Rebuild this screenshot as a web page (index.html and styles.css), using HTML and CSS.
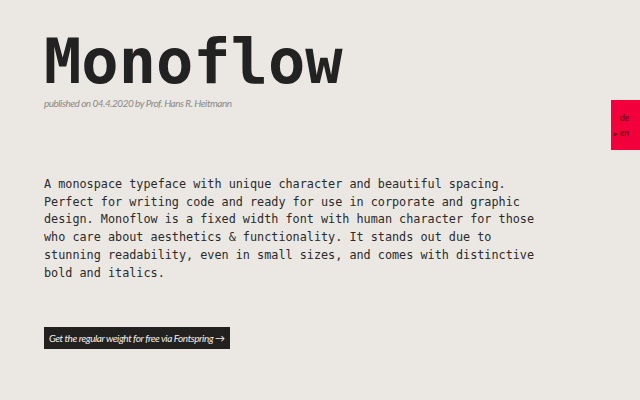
FILE: index.html
```html
<!DOCTYPE html>
<html lang="en">
<head>
<meta charset="utf-8">
<title>Monoflow</title>
<link rel="stylesheet" href="styles.css">
</head>
<body>
<nav class="lang">
  <a class="lang-item" href="#">de</a>
  <a class="lang-item active" href="#"><span class="caret">▸</span>en</a>
</nav>
<main class="page">
  <header class="head">
    <h1 class="title">Monoflow</h1>
    <p class="byline">published on 04.4.2020 by Prof. Hans R. Heitmann</p>
  </header>
  <p class="intro">A monospace typeface with unique character and beautiful spacing.
Perfect for writing code and ready for use in corporate and graphic
design. Monoflow is a fixed width font with human character for those
who care about aesthetics &amp; functionality. It stands out due to
stunning readability, even in small sizes, and comes with distinctive
bold and italics.</p>
  <a class="cta" href="#">Get the regular weight for free via Fontspring <span class="arrow">→</span></a>
</main>
</body>
</html>
```
FILE: styles.css
```css
html, body {
  margin: 0;
  padding: 0;
}
body {
  background: #ebe8e4;
  color: #2a2a2a;
  width: 640px;
  height: 400px;
  overflow: hidden;
  position: relative;
}
.page {
  padding: 26px 0 0 44px;
  display: flex;
  flex-direction: column;
  align-items: flex-start;
}
.title {
  margin: 0;
  font-family: "DejaVu Sans Mono", monospace;
  font-weight: bold;
  font-size: 62px;
  line-height: 72px;
  color: #222;
}
.byline {
  margin: -2px 0 0;
  font-family: Lato, sans-serif;
  font-style: italic;
  font-size: 10px;
  line-height: 14px;
  letter-spacing: -0.5px;
  color: #8a8886;
}
.intro {
  margin: 66px 0 0;
  font-family: "DejaVu Sans Mono", monospace;
  font-size: 11.8px;
  line-height: 17.7px;
  white-space: pre;
  color: #2a2a2a;
}
.cta {
  margin-top: 45px;
  background: #222120;
  color: #f2f0ec;
  font-family: Lato, sans-serif;
  font-style: italic;
  font-size: 10px;
  line-height: 22px;
  letter-spacing: -0.45px;
  padding: 0 5px;
  text-decoration: none;
}
.arrow {
  font-style: normal;
  letter-spacing: 0;
}
.lang {
  position: absolute;
  top: 100px;
  right: 0;
  width: 29px;
  height: 50px;
  background: #f2003c;
  display: flex;
  flex-direction: column;
  align-items: flex-end;
  justify-content: center;
  gap: 3px;
  padding-right: 11px;
  box-sizing: border-box;
}
.lang-item {
  font-family: Lato, sans-serif;
  font-style: italic;
  font-size: 9px;
  line-height: 12px;
  color: #4a0012;
  text-decoration: none;
}
.caret {
  font-style: normal;
  font-size: 7px;
  margin-right: 2px;
}
```
